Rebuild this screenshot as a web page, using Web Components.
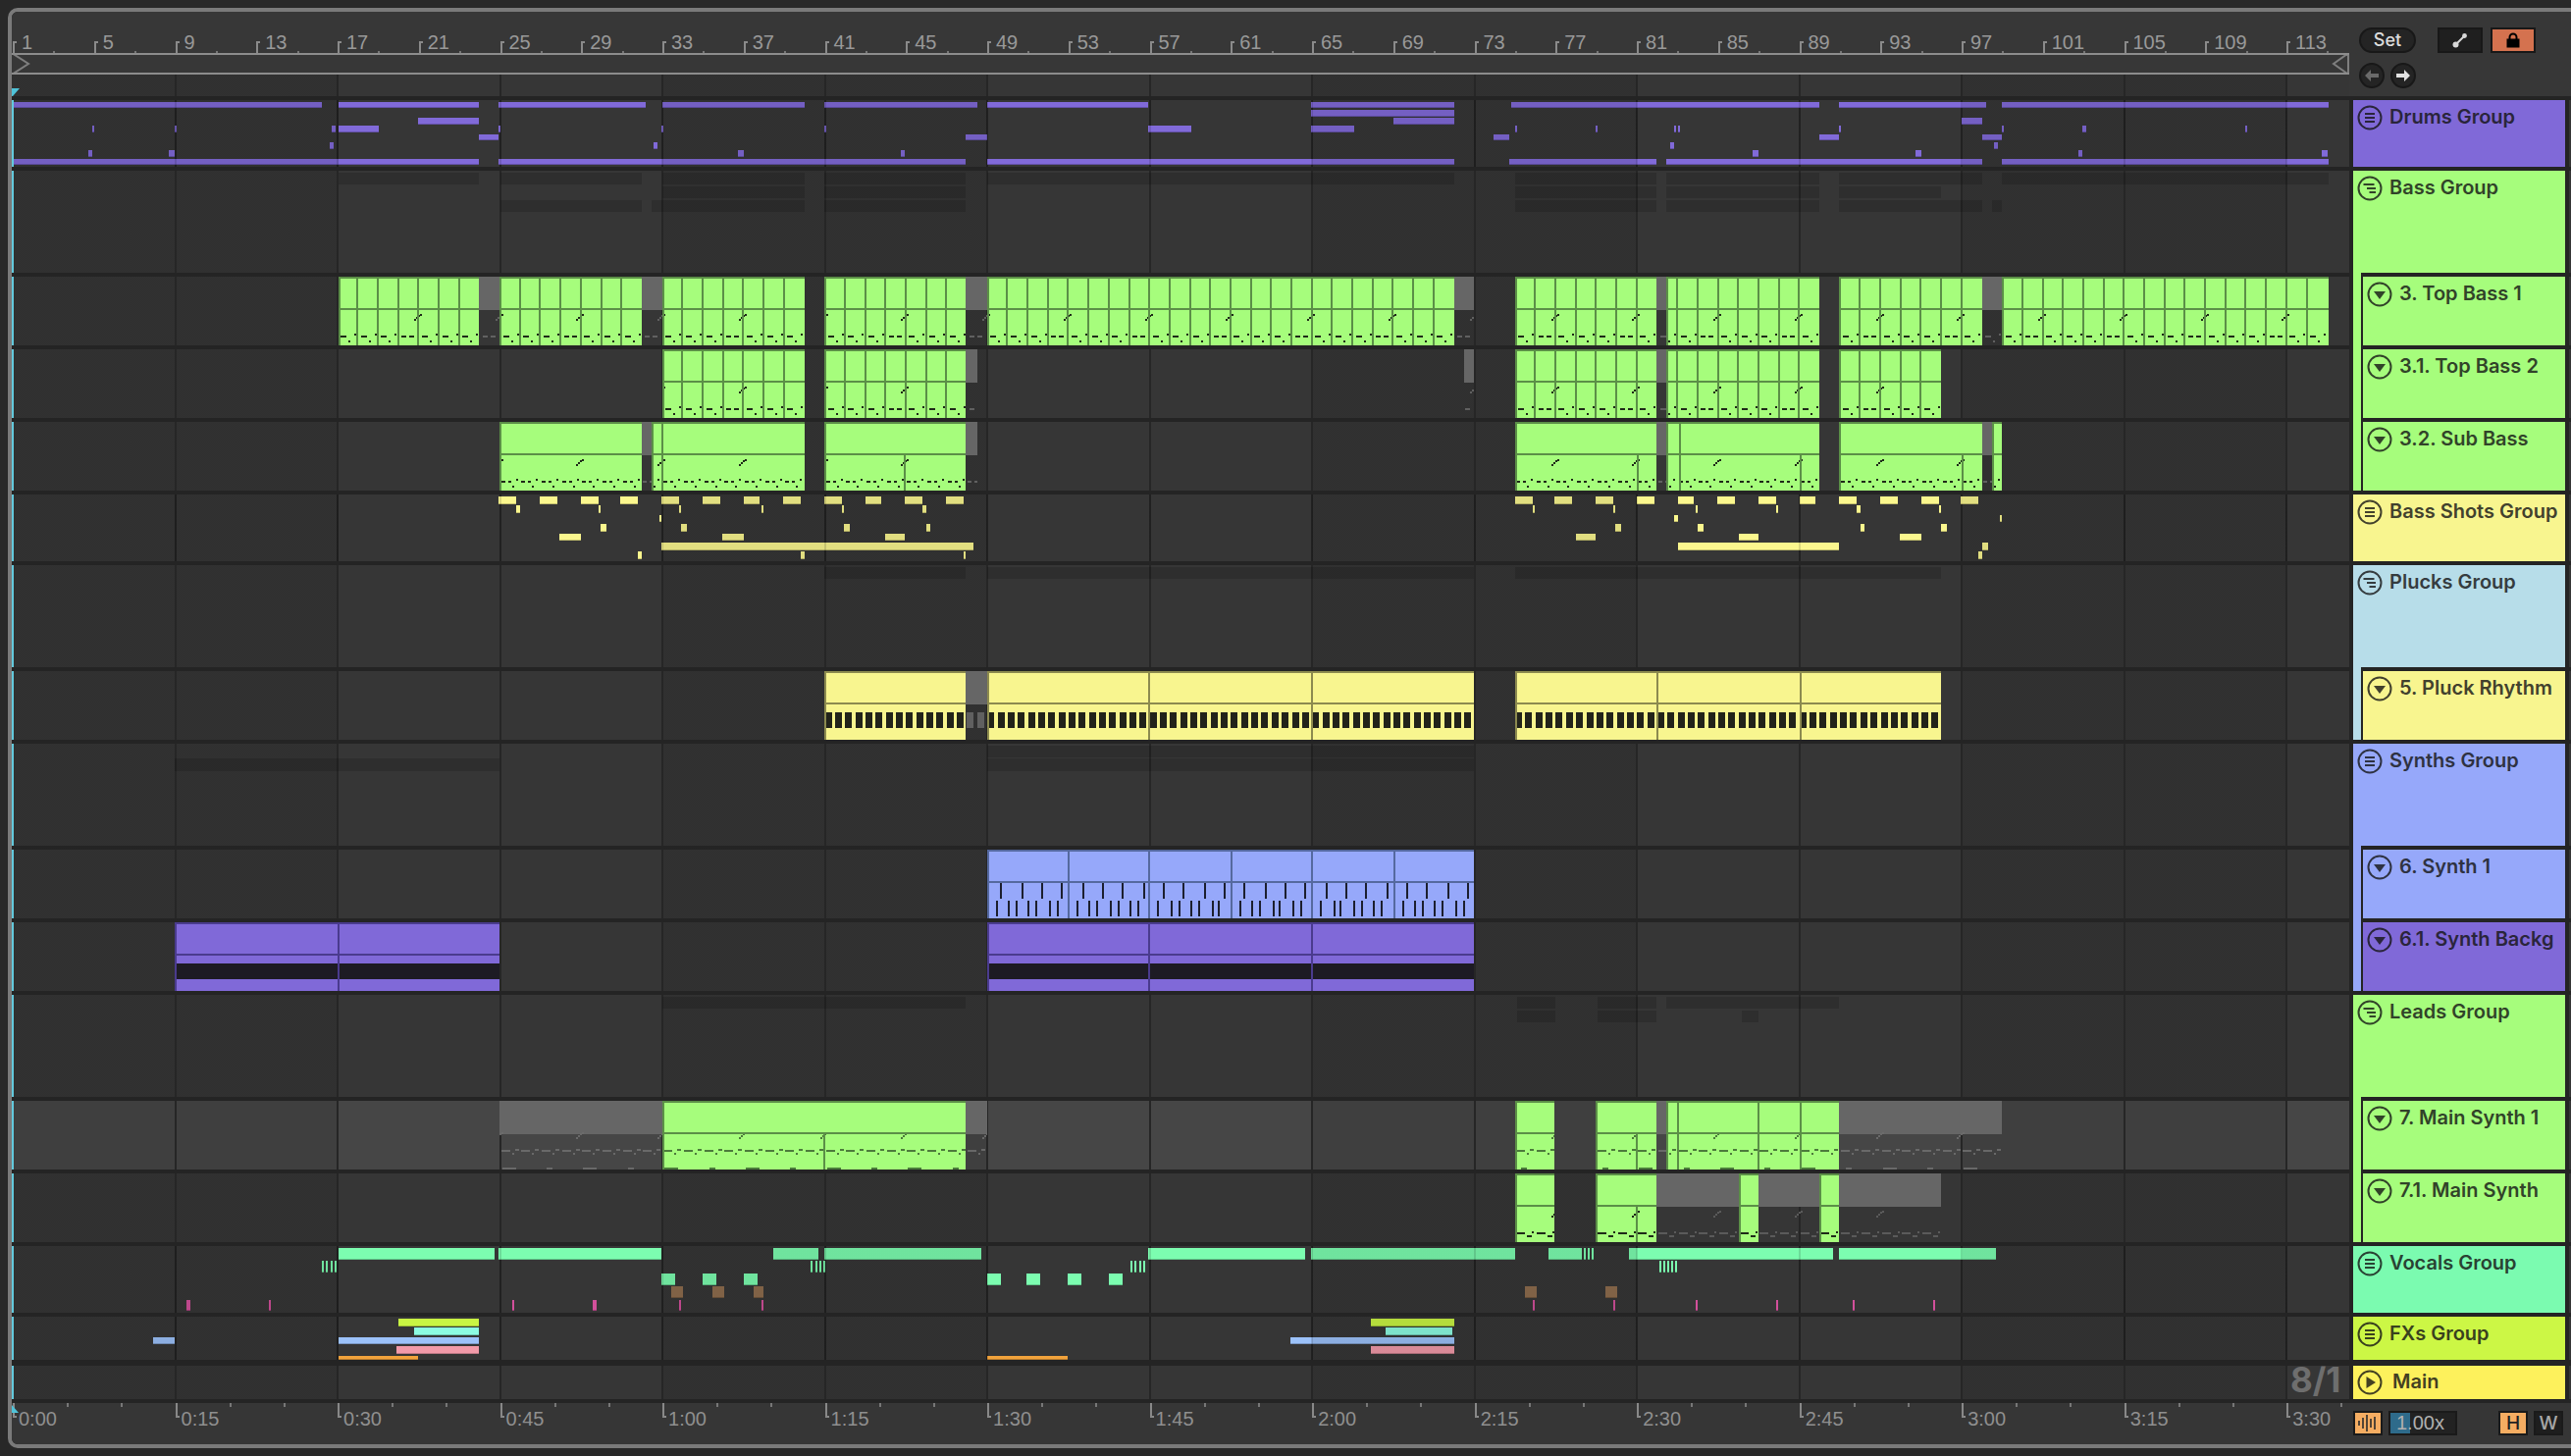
<!DOCTYPE html>
<html>
<head>
<meta charset="utf-8">
<title>Arrangement</title>
<style>
	html, body { margin: 0; background: #282828; }
	body { width: 2620px; height: 1484px; padding: 8px 0 0 8px; box-sizing: border-box; overflow: hidden; font-family: "Liberation Sans", Arial, sans-serif; }
</style>
</head>
<body>
<arrangement-view>
	<top-strip></top-strip>
	<track-row kind="closed" color="#8069d8" height="68" lane="drums">Drums Group</track-row>
	<track-row kind="open" color="#a6fd7c" height="104" lane="bassGhost">Bass Group</track-row>
	<track-row kind="track" color="#a6fd7c" parent="#a6fd7c" height="70" lane="topBass1">3. Top Bass 1</track-row>
	<track-row kind="track" color="#a6fd7c" parent="#a6fd7c" height="70" lane="topBass2">3.1. Top Bass 2</track-row>
	<track-row kind="track" color="#a6fd7c" parent="#a6fd7c" height="70" lane="subBass">3.2. Sub Bass</track-row>
	<track-row kind="closed" color="#f8f58f" height="68" lane="shots">Bass Shots Group</track-row>
	<track-row kind="open" color="#b7dde9" height="104" lane="plucksGhost">Plucks Group</track-row>
	<track-row kind="track" color="#f8f58f" parent="#b7dde9" height="70" lane="pluck">5. Pluck Rhythm</track-row>
	<track-row kind="closed" color="#96a8fa" height="104" lane="synthsGhost">Synths Group</track-row>
	<track-row kind="track" color="#96a8fa" parent="#96a8fa" height="70" lane="synth1">6. Synth 1</track-row>
	<track-row kind="track" color="#8069d8" parent="#96a8fa" height="70" lane="synthBack">6.1. Synth Backg</track-row>
	<track-row kind="open" color="#a6fd7c" height="104" lane="leadsGhost">Leads Group</track-row>
	<track-row kind="track" color="#a6fd7c" parent="#a6fd7c" height="70" lane="main1" selected>7. Main Synth 1</track-row>
	<track-row kind="track" color="#a6fd7c" parent="#a6fd7c" height="70" lane="main2">7.1. Main Synth</track-row>
	<track-row kind="closed" color="#7bfbb0" height="68" lane="vocals">Vocals Group</track-row>
	<track-row kind="closed" color="#ccf745" height="44" lane="fx">FXs Group</track-row>
	<track-row kind="main" color="#fdf15c" height="34" lane="none" style="margin-top:2px">Main</track-row>
	<bottom-strip></bottom-strip>
</arrangement-view>

<script>
const BAR = 20.69;
const barX = b => 13 + (b - 1) * BAR;
const LANE_LEFT = 12;
const LANE_W = 2382;

const hardGradient = (ranges, color) => {
	let at = 0;
	const parts = [];
	for (const [a, b] of ranges) {
		parts.push(`transparent ${at}px ${a}px`, `${color} ${a}px ${b}px`);
		at = b;
	}
	parts.push(`transparent ${at}px`);
	return `linear-gradient(to right,${parts.join(',')})`;
};

const GRID = [];
for (let b = 9; b <= 113; b += 8) GRID.push([barX(b) - 1 - LANE_LEFT, barX(b) + 1 - LANE_LEFT]);
const DIM = [[0, 333], [663, 994], [1325, 1656], [1988, 2318]];
const LINES_BG = hardGradient(GRID, '#262626');
const LINES_FAINT = hardGradient(GRID, 'rgba(0,0,0,.13)');
const DIM_BG = hardGradient(DIM, 'rgba(0,0,0,.1)');

const PALETTE = {
	green: ['#a6fd7c', '#5b8f47'],
	yellow: ['#f8f58f', '#8c8a4f'],
	blue: ['#96a8fa', '#55699f'],
	purple: ['#8069d8', '#4a3b8e']
};

const rect = (x, y, w, h, fill) => `<rect x="${x.toFixed(1)}" y="${y}" width="${w.toFixed(1)}" height="${h}" fill="${fill}"/>`;

// notes inside a clip, in page x, returned as rects relative to the clip start
const eachBar = (x0, x1, fn) => {
	for (let b = Math.floor((x0 - 13) / BAR); barX(b + 1) < x1; b++) fn(barX(b + 1), b);
};
const stairs = (x0, x1, y, fg, out) => {
	for (let k = -1; k < 30; k++) {
		const s = 13 + 82.76 * (k + 0.94);
		if (s + 8 < x0 || s > x1) continue;
		out.push(rect(s - x0, y + 5, 2, 2, fg), rect(s + 2 - x0, y + 3, 2, 2, fg), rect(s + 4 - x0, y + 1, 2, 2, fg), rect(s + 6 - x0, y, 2, 1.5, fg));
	}
};
const NOTES = {
	bass(x0, x1, fg) {
		const out = [];
		eachBar(x0, x1, (x, b) => {
			const rx = x - x0;
			if (b % 4 === 3) {
				out.push(rect(rx + 3, 60, 5, 2, fg), rect(rx + 11, 60, 5, 2, fg));
			} else {
				out.push(rect(rx + 3, 60, 6, 2, fg), rect(rx + 11, 65, 2, 2, fg), rect(rx + 17, 58, 2, 2, fg));
			}
		});
		stairs(x0, x1, 38, fg, out);
		return out.join('');
	},
	sub(x0, x1, fg) {
		const out = [];
		eachBar(x0, x1, (x, b) => {
			const rx = x - x0;
			out.push(rect(rx + 1, 60, 4, 2, fg), rect(rx + 8, 60, 3, 2, fg), rect(rx + 12, 65, 2, 2, fg), rect(rx + 16, 58, 2, 2, fg));
		});
		stairs(x0, x1, 38, fg, out);
		return out.join('');
	},
	main(x0, x1, fg) {
		const out = [];
		eachBar(x0, x1, (x, b) => {
			const rx = x - x0;
			out.push(rect(rx + 1, 50, 9, 2, fg), rect(rx + 12, 53, 2, 2, fg), rect(rx + 15, 49, 4, 2, fg));
			if (b % 4 === 0) out.push(rect(rx + 2, 68, 14, 2, fg));
			if (b % 4 === 2) out.push(rect(rx + 6, 68, 6, 2, fg));
		});
		stairs(x0, x1, 32, fg, out);
		return out.join('');
	},
	main2(x0, x1, fg) {
		const out = [];
		eachBar(x0, x1, (x, b) => {
			const rx = x - x0;
			out.push(rect(rx + 1, 60, 9, 2, fg), rect(rx + 12, 63, 5, 2, fg), rect(rx + 17, 59, 2, 2, fg));
		});
		stairs(x0, x1, 38, fg, out);
		return out.join('');
	},
	pluck(x0, x1, fg) {
		const out = [];
		const p = BAR / 2;
		for (let k = Math.floor((x0 - 13) / p); 13 + k * p < x1; k++) {
			out.push(rect(13 + k * p - x0, 42, 7, 16, fg));
		}
		return out.join('');
	},
	synth(x0, x1, fg) {
		const up = [57, 123, 183, 243, 309, 369, 429, 495, 555, 615, 681, 741, 801, 867, 927, 987, 1053, 1113, 1173, 1239, 1299, 1359, 1425, 1485];
		const low = [45, 81, 105, 141, 165, 207, 231, 291, 327, 351, 393, 417, 453, 477, 537, 579, 603, 639, 663, 705, 723, 789, 825, 849, 891, 909, 951, 975, 1035, 1077, 1095, 1137, 1161, 1197, 1221, 1287, 1323, 1347, 1383, 1407, 1449, 1473];
		const at = v => 1000 + v / 3 - x0;
		return up.map(v => rect(at(v), 34, 2, 16, fg)).join('') + low.map(v => rect(at(v), 52, 2, 16, fg)).join('');
	},
	band(x0, x1) {
		return rect(0, 42, x1 - x0, 16, '#1d1b24');
	}
};

const clipSvg = (x0, x1, { color = 'green', full = [], body = [], every = 0, notes, ink, h = 70 }) => {
	const [fill, edge] = PALETTE[color];
	const w = x1 - x0;
	const parts = [rect(0, 0, w, h, fill)];
	if (notes) parts.push(NOTES[notes](x0, x1, ink));
	parts.push(rect(0, 0, w, 2, edge), rect(0, 32, w, 2, edge), rect(0, 0, 2, h, edge));
	const divs = full.slice();
	if (every) eachBar(x0, x1, x => { if (x > x0 + 8 && x < x1 - 8) divs.push(x - 0.5); });
	for (const d of divs) parts.push(rect(d - x0 - 1, 0, 2, h, edge));
	for (const d of body) parts.push(rect(d - x0 - 1, 34, 2, h - 34, edge));
	return `<svg class="clip" shape-rendering="crispEdges" style="left:${x0 - LANE_LEFT}px" width="${w}" height="${h}" viewBox="0 0 ${w} ${h}">${parts.join('')}</svg>`;
};
const graySvg = (x0, x1, { notes, grayInk = '#666', h = 70 }) => {
	const w = x1 - x0;
	const ink = notes && notes !== 'band' ? NOTES[notes](x0, x1, grayInk) : '';
	return `<svg class="clip" shape-rendering="crispEdges" style="left:${x0 - LANE_LEFT}px" width="${w}" height="${h}" viewBox="0 0 ${w} ${h}">${rect(0, 0, w, 34, '#666')}<g opacity=".9">${ink}</g></svg>`;
};

const clipsRow = (base, list) => list.map(([x0, x1, extra]) => {
	if (extra === 'gray') return graySvg(x0, x1, base);
	return clipSvg(x0, x1, { ...base, ...extra });
}).join('');

const barsRow = (lanes, ghost) => lanes.map(([y, h, color, spans]) => {
	let out = '';
	for (let i = 0; i < spans.length; i += 2) {
		out += `<div class="${ghost ? 'ghost' : 'note'}" style="left:${spans[i] - LANE_LEFT}px;width:${spans[i + 1] - spans[i]}px;top:${y}px;height:${h}px;background:${color}"></div>`;
	}
	return out;
}).join('');

const PURPLE = '#816ad9';
const YEL = '#fbf78e';
const TEAL = '#7cfdb0';
const BROWN = '#8e6d4e';
const PINK = '#d2509b';
const GHOST = 'rgba(0,0,0,.14)';

const LANES = {
	none: { over: false, html: '' },
	drums: { over: true, html: barsRow([
		[2, 6, PURPLE, [13, 328, 345, 488, 508, 658, 675, 820, 840, 996, 1006, 1170, 1336, 1482, 1540, 1854, 1874, 2024, 2040, 2373]],
		[10, 7, PURPLE, [1336, 1482]],
		[18, 7, PURPLE, [426, 488, 1420, 1482, 1999, 2020]],
		[26, 7, PURPLE, [94, 96, 178, 180, 338, 342, 345, 386, 508, 510, 674, 676, 840, 842, 1170, 1214, 1336, 1380, 1544, 1546, 1626, 1628, 1706, 1708, 1710, 1712, 1874, 1876, 2040, 2042, 2122, 2126, 2288, 2290]],
		[35, 6, PURPLE, [488, 508, 984, 1006, 1522, 1538, 1854, 1874, 2020, 2040]],
		[43, 7, PURPLE, [336, 340, 666, 670, 1702, 1706, 2032, 2036]],
		[51, 7, PURPLE, [90, 94, 172, 178, 752, 758, 918, 922, 1786, 1792, 1952, 1958, 2118, 2122, 2366, 2372]],
		[60, 6, PURPLE, [13, 488, 508, 984, 1006, 1482, 1538, 1688, 1698, 2020, 2040, 2373]]
	]) },
	bassGhost: { over: false, html: barsRow([
		[2, 12, GHOST, [345, 488, 510, 654, 675, 820, 840, 984, 1006, 1482, 1544, 1688, 1698, 1854, 1874, 2020, 2040, 2373]],
		[16, 12, GHOST, [675, 820, 840, 984, 1544, 1688, 1698, 1854, 1874, 1978]],
		[30, 12, GHOST, [510, 654, 664, 820, 840, 984, 1544, 1688, 1698, 1854, 1874, 2020, 2030, 2040]]
	], true) },
	topBass1: { over: false, html: clipsRow({ every: 1, notes: 'bass', ink: '#1e2a18' }, [
		[345, 488], [488, 509, 'gray'], [509, 654], [654, 675, 'gray'], [675, 820], [840, 984], [984, 1006, 'gray'], [1006, 1482], [1482, 1502, 'gray'],
		[1544, 1688], [1688, 1698, 'gray'], [1698, 1854], [1874, 2020], [2020, 2040, 'gray'], [2040, 2373]
	]) },
	topBass2: { over: false, html: clipsRow({ every: 1, notes: 'bass', ink: '#1e2a18' }, [
		[675, 820], [840, 984], [984, 996, 'gray'], [1492, 1502, 'gray'], [1544, 1688], [1688, 1698, 'gray'], [1698, 1854], [1874, 1978]
	]) },
	subBass: { over: false, html: clipsRow({ notes: 'sub', ink: '#1e2a18' }, [
		[509, 654], [654, 664, 'gray'], [664, 820, { full: [675] }], [840, 984, { body: [922] }], [984, 996, 'gray'],
		[1544, 1688, { body: [1669] }], [1688, 1698, 'gray'], [1698, 1854, { full: [1712], body: [1835] }], [1874, 2020, { body: [2000] }], [2020, 2030, 'gray'], [2030, 2040]
	]) },
	shots: { over: true, html: barsRow([
		[2, 8, YEL, [508, 526, 550, 568, 592, 610, 632, 650, 674, 692, 716, 734, 758, 774, 798, 816, 840, 858, 882, 898, 922, 940, 964, 982, 1544, 1562, 1584, 1602, 1626, 1644, 1668, 1686, 1710, 1726, 1750, 1768, 1792, 1810, 1834, 1850, 1874, 1892, 1916, 1934, 1958, 1976, 1998, 2016]],
		[11, 8, YEL, [526, 530, 610, 612, 692, 694, 776, 778, 858, 860, 940, 944, 1562, 1564, 1644, 1646, 1728, 1730, 1810, 1812, 1892, 1896, 1976, 1978]],
		[21, 7, YEL, [672, 674, 1706, 1710, 2038, 2040]],
		[30, 8, YEL, [612, 618, 694, 700, 860, 866, 944, 948, 1646, 1652, 1730, 1736, 1896, 1900, 1978, 1984]],
		[40, 7, YEL, [570, 592, 736, 758, 902, 922, 1606, 1626, 1772, 1792, 1936, 1958]],
		[49, 8, YEL, [674, 992, 1710, 1874, 2020, 2026]],
		[58, 8, YEL, [650, 654, 816, 820, 982, 984, 2016, 2020]]
	]) },
	plucksGhost: { over: false, html: barsRow([[2, 12, GHOST, [840, 984, 1006, 1502, 1544, 1978]]], true) },
	pluck: { over: false, html: clipsRow({ color: 'yellow', notes: 'pluck', ink: '#22231a' }, [
		[840, 984], [984, 1006, 'gray'], [1006, 1502, { full: [1171, 1337] }], [1544, 1978, { full: [1689, 1835] }]
	]) },
	synthsGhost: { over: false, html: barsRow([[2, 12, GHOST, [1006, 1502]], [15, 13, GHOST, [178, 509, 1006, 1502]]], true) },
	synth1: { over: false, html: clipsRow({ color: 'blue', notes: 'synth', ink: '#1c1f2e' }, [
		[1006, 1502, { full: [1089, 1171, 1255, 1337, 1421] }]
	]) },
	synthBack: { over: false, html: clipsRow({ color: 'purple', notes: 'band' }, [
		[178, 509, { full: [345] }], [1006, 1502, { full: [1171, 1337] }]
	]) },
	leadsGhost: { over: false, html: barsRow([
		[2, 12, GHOST, [675, 984, 1546, 1585, 1628, 1688, 1698, 1874]],
		[16, 12, GHOST, [1546, 1585, 1628, 1688, 1775, 1792]]
	], true) },
	main1: { over: false, html: clipsRow({ notes: 'main', ink: '#4c7b3b', grayInk: '#6d6d6d' }, [
		[509, 675, 'gray'], [675, 984, { body: [840] }], [984, 1006, 'gray'], [1544, 1584], [1626, 1688, { body: [1668] }], [1688, 1698, 'gray'],
		[1698, 1874, { full: [1710, 1792, 1835] }], [1874, 2040, 'gray']
	]) },
	main2: { over: false, html: clipsRow({ notes: 'main2', ink: '#1e2a18', grayInk: '#5f5f5f' }, [
		[1544, 1584], [1626, 1688, { body: [1668] }], [1688, 1772, 'gray'], [1772, 1792], [1792, 1854, 'gray'], [1854, 1874], [1874, 1978, 'gray']
	]) },
	vocals: { over: true, html: barsRow([
		[2, 12, TEAL, [345, 504, 508, 674, 788, 834, 840, 1000, 1170, 1330, 1336, 1544, 1578, 1612, 1614, 1616, 1618, 1620, 1622, 1624, 1660, 1868, 1874, 2034]],
		[15, 12, TEAL, [328, 330, 332, 334, 337, 339, 341, 343, 826, 828, 831, 833, 835, 837, 839, 841, 1152, 1154, 1156, 1158, 1161, 1163, 1165, 1167, 1691, 1693, 1695, 1697, 1699, 1701, 1703, 1705, 1707, 1709]],
		[28, 12, TEAL, [674, 688, 716, 730, 758, 772, 1006, 1020, 1046, 1060, 1088, 1102, 1130, 1144]],
		[41, 12, BROWN, [684, 696, 726, 738, 768, 778, 1554, 1566, 1636, 1648]],
		[55, 11, PINK, [190, 194, 274, 276, 522, 524, 604, 608, 692, 694, 776, 778, 1562, 1564, 1644, 1646, 1728, 1730, 1810, 1812, 1888, 1890, 1970, 1972]]
	]) },
	fx: { over: true, html: barsRow([
		[2, 8, '#c9f543', [406, 488, 1397, 1482]],
		[11, 8, '#8cfbe2', [422, 488, 1412, 1480]],
		[21, 7, '#9cc2fa', [156, 178, 345, 488, 1315, 1482]],
		[30, 8, '#f29aa9', [404, 488, 1397, 1482]],
		[40, 4, '#f2a33c', [345, 426, 1006, 1088]]
	]) }
};

const laneStyle = `
	.lane { position: relative; flex: 0 0 ${LANE_W}px; overflow: hidden; background-color: var(--lane, #363636); background-image: ${LINES_BG}, ${DIM_BG}; }
	.lane.over { background-image: ${LINES_BG}; }
	.lane .cyan { position: absolute; left: 0; top: 0; bottom: 0; width: 2px; background: #63c9dc; z-index: 3; }
	.lane .shade { position: absolute; inset: 0; background-image: ${LINES_FAINT}, ${DIM_BG}; z-index: 2; }
	.lane .clip { position: absolute; top: 0; display: block; }
	.lane .note { position: absolute; box-shadow: inset 0 -1px rgba(0,0,0,.22); }
	.lane .ghost { position: absolute; }
`;

const ICONS = {
	closed: '<path d="M8 9h10M8 13h10M8 17h10"/>',
	open: '<path d="M6.5 9h11M10 13h9M12.5 17h6.5"/>',
	track: '<path d="M7 10h12l-6 8z" fill="currentColor" stroke="none"/>',
	main: '<path d="M9.5 7l9.5 6-9.5 6z" fill="currentColor" stroke="none"/>'
};

const trackRowTemplate = document.createElement('template');
trackRowTemplate.innerHTML = `
	<style>
		:host { display: flex; flex: none; background: #242424; }
		${laneStyle}
		.gutter { flex: 0 0 4px; }
		.side { flex: 0 0 216px; display: flex; min-width: 0; }
		.strip { flex: 0 0 8px; margin-top: -4px; background: var(--parent); }
		.nick { flex: 0 0 2px; }
		.head { flex: 1; min-width: 0; display: flex; align-items: flex-start; gap: 7px; padding: 5px 0 0 4px; background: var(--color); color: color-mix(in srgb, var(--color) 20%, #141414); font: 600 20px/25px Inter, "Noto Sans", sans-serif; overflow: hidden; white-space: nowrap; }
		:host([kind="main"]) .head { gap: 10px; padding-top: 4px; }
		.head svg { flex: none; }
		.tail { flex: 1; background: #363636; margin-left: 4px; }
		.label { overflow: hidden; }
	</style>
	<div class="lane"></div>
	<div class="gutter"></div>
	<div class="side">
		<div class="strip" hidden></div>
		<div class="nick" hidden></div>
		<div class="head">
			<svg width="26" height="26" viewBox="0 0 26 26" fill="none" stroke="currentColor" stroke-width="2"><circle cx="13" cy="13" r="11.5"/><g class="glyph"></g></svg>
			<span class="label"><slot></slot></span>
		</div>
	</div>
	<div class="tail"></div>
`;

class TrackRow extends HTMLElement {
	constructor() {
		super();
		this.attachShadow({ mode: 'open' }).append(trackRowTemplate.content.cloneNode(true));
	}
	connectedCallback() {
		const root = this.shadowRoot;
		const data = LANES[this.getAttribute('lane')] || LANES.none;
		const kind = this.getAttribute('kind');
		this.style.height = this.getAttribute('height') + 'px';
		this.style.setProperty('--color', this.getAttribute('color'));
		if (this.hasAttribute('parent')) {
			this.style.setProperty('--parent', this.getAttribute('parent'));
			root.querySelector('.strip').hidden = false;
			root.querySelector('.nick').hidden = false;
		}
		if (this.hasAttribute('selected')) this.style.setProperty('--lane', '#464646');
		root.querySelector('.glyph').innerHTML = ICONS[kind];
		const lane = root.querySelector('.lane');
		lane.classList.toggle('over', data.over);
		lane.innerHTML = data.html + (data.over ? '<div class="shade"></div>' : '') + '<div class="cyan"></div>';
	}
}
customElements.define('track-row', TrackRow);

const topStripTemplate = document.createElement('template');
topStripTemplate.innerHTML = `
	<style>
		:host { display: flex; height: 86px; background: #373737; flex: none; }
		${laneStyle}
		.left { flex: 0 0 ${LANE_W}px; display: flex; flex-direction: column; }
		.ruler { height: 42px; display: flex; padding-left: 1px; box-sizing: border-box; color: #999; font: 20px/20px "Liberation Sans", Arial, sans-serif; }
		.ruler span { flex: 0 0 82.76px; box-sizing: border-box; padding: 21px 0 0 9px; background-repeat: no-repeat;
			background-image: linear-gradient(#8a8a8a,#8a8a8a), linear-gradient(#8a8a8a,#8a8a8a), linear-gradient(#777,#777);
			background-size: 2px 12px, 4px 2px, 2px 2px;
			background-position: 0 30px, 0 30px, 41.4px 40px; }
		.ruler span:last-child { flex: 1; }
		.brace { height: 22px; box-sizing: border-box; border-top: 2px solid #8c8c8c; border-bottom: 2px solid #8c8c8c; }
		.brace svg { display: block; }
		.lane { height: 22px; flex: none; }
		.lane svg { position: absolute; left: 0; bottom: 0; }
		.controls { flex: 1; padding: 16px 0 0 10px; display: flex; flex-direction: column; gap: 10px; }
		.row { display: flex; align-items: center; }
		.set { width: 58px; height: 26px; box-sizing: border-box; border: 2px solid #181818; border-radius: 13px; background: #242424; color: #ddd; font: 500 18px/22px Inter, sans-serif; text-align: center; }
		.sq { width: 46px; height: 26px; box-sizing: border-box; border: 2px solid #181818; background: #1f1f1f; display: flex; align-items: center; justify-content: center; }
		.sq.first { margin-left: 22px; }
		.sq.lock { margin-left: 8px; background: #d4724f; }
		.round { width: 26px; height: 26px; box-sizing: border-box; border: 2px solid #181818; border-radius: 50%; background: #242424; display: flex; align-items: center; justify-content: center; }
		.round + .round { margin-left: 6px; }
	</style>
	<div class="left">
		<div class="ruler"></div>
		<div class="brace">
			<svg width="2382" height="18" viewBox="0 0 2382 18" fill="none" stroke="#7e7e7e" stroke-width="2"><path d="M1.5 -1L17 9 1.5 19"/><path d="M2381 -1V19M2380 -1L2366 9 2380 19"/></svg>
		</div>
		<div class="lane"><svg width="9" height="8" viewBox="0 0 9 8"><path d="M0 0H8L1 8H0z" fill="#4fc3d9"/></svg></div>
	</div>
	<div class="controls">
		<div class="row">
			<div class="set">Set</div>
			<div class="sq first"><svg width="16" height="16" viewBox="0 0 16 16"><path d="M3 13L13 3" stroke="#d8d8d8" stroke-width="2"/><circle cx="3.5" cy="12.5" r="3" fill="#d8d8d8"/><circle cx="12.5" cy="3.5" r="2.4" fill="#d8d8d8"/></svg></div>
			<div class="sq lock"><svg width="16" height="16" viewBox="0 0 16 16"><path d="M4.5 7V5a3.5 3.5 0 0 1 7 0v2" fill="none" stroke="#000" stroke-width="2"/><rect x="1.5" y="6.5" width="13" height="9" fill="#000"/></svg></div>
		</div>
		<div class="row">
			<div class="round"><svg width="16" height="14" viewBox="0 0 16 14"><path d="M1 7l6-6v4h8v4H7v4z" fill="#6a6a6a"/></svg></div>
			<div class="round"><svg width="16" height="14" viewBox="0 0 16 14"><path d="M15 7L9 1v4H1v4h8v4z" fill="#e2e2e2"/></svg></div>
		</div>
	</div>
`;

class TopStrip extends HTMLElement {
	constructor() {
		super();
		this.attachShadow({ mode: 'open' }).append(topStripTemplate.content.cloneNode(true));
		const ruler = this.shadowRoot.querySelector('.ruler');
		for (let b = 1; b <= 113; b += 4) {
			const cell = document.createElement('span');
			cell.textContent = b;
			ruler.append(cell);
		}
	}
}
customElements.define('top-strip', TopStrip);

const bottomStripTemplate = document.createElement('template');
bottomStripTemplate.innerHTML = `
	<style>
		:host { display: flex; height: 42px; background: #363636; flex: none; }
		.ruler { flex: 0 0 ${LANE_W}px; position: relative; display: flex; padding-left: 1px; box-sizing: border-box; color: #8f8f8f; font: 20px/22px "Liberation Sans", Arial, sans-serif; }
		.ruler span { flex: 0 0 165.52px; box-sizing: border-box; padding: 5px 0 0 6px; background-repeat: no-repeat;
			background-image: linear-gradient(#888,#888), linear-gradient(#888,#888), linear-gradient(#777,#777), linear-gradient(#777,#777);
			background-size: 2px 15px, 4px 2px, 2px 4px, 2px 4px;
			background-position: 0 0, 0 13px, 55.2px 0, 110.3px 0; }
		.ruler span:last-child { flex: 1; }
		.ruler svg { position: absolute; left: 0; top: 2px; }
		.view { flex: 1; display: flex; align-items: flex-start; padding: 8px 0 0 4px; }
		.btn { width: 30px; height: 25px; box-sizing: border-box; border: 2px solid #1a1a1a; background: #f5ad62; color: #222; font: 500 19px/21px Inter, sans-serif; text-align: center; display: flex; align-items: center; justify-content: center; }
		.btn.off { background: #1e1e1e; color: #a8a8a8; margin-left: 6px; }
		.speed { width: 70px; height: 25px; box-sizing: border-box; margin-left: 6px; margin-right: 42px; border: 2px solid #1a1a1a; background: linear-gradient(to right, #2e6b8b 20px, #222 20px); color: #b0b0b0; font: 20px/21px "Liberation Sans", Arial, sans-serif; padding-left: 6px; }
	</style>
	<div class="ruler"><svg width="8" height="8" viewBox="0 0 8 8"><path d="M0 0L7 8H0z" fill="#4fc3d9"/></svg></div>
	<div class="view">
		<div class="btn"><svg width="22" height="19" viewBox="0 0 22 19" stroke="#2b2b2b" stroke-width="1.6"><path d="M2 7v5M6 4v11M10 1v17M14 5v9M18 3v13"/></svg></div>
		<div class="speed">1.00x</div>
		<div class="btn">H</div>
		<div class="btn off">W</div>
	</div>
`;

class BottomStrip extends HTMLElement {
	constructor() {
		super();
		this.attachShadow({ mode: 'open' }).append(bottomStripTemplate.content.cloneNode(true));
		const ruler = this.shadowRoot.querySelector('.ruler');
		for (let s = 0; s <= 210; s += 15) {
			const cell = document.createElement('span');
			cell.textContent = Math.floor(s / 60) + ':' + String(s % 60).padStart(2, '0');
			ruler.append(cell);
		}
	}
}
customElements.define('bottom-strip', BottomStrip);

const viewTemplate = document.createElement('template');
viewTemplate.innerHTML = `
	<style>
		:host { display: flex; flex-direction: column; gap: 4px; width: 2612px; height: 1468px; box-sizing: border-box; border: 4px solid #7a7a7a; border-right: none; border-radius: 10px 0 0 10px; background: #242424; overflow: hidden; position: relative; }
		.beat { position: absolute; left: 2322px; top: 1377px; color: #6e6e6e; font: 700 35px/34px Inter, sans-serif; z-index: 5; }
	</style>
	<slot></slot>
	<div class="beat">8/1</div>
`;

class ArrangementView extends HTMLElement {
	constructor() {
		super();
		this.attachShadow({ mode: 'open' }).append(viewTemplate.content.cloneNode(true));
	}
}
customElements.define('arrangement-view', ArrangementView);
</script>
</body>
</html>
